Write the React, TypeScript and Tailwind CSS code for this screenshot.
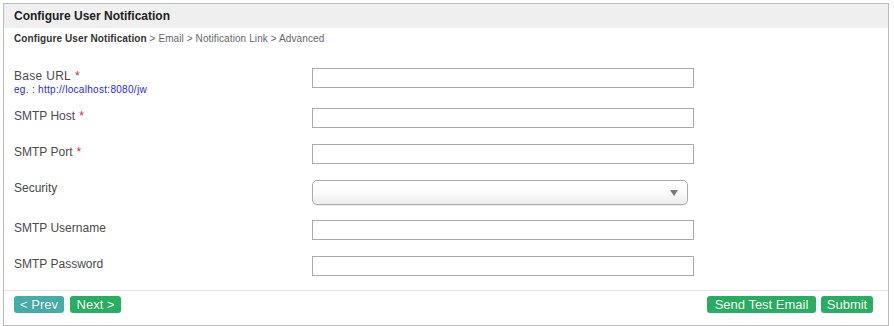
import React from 'react';

const Req = () => <span className="text-[#e0262b] ml-[4px]">*</span>;

const TextInput = () => (
  <input
    type="text"
    className="block w-[382px] h-[20px] border border-[#a9a9a9] bg-white px-1 text-[12px] outline-none"
  />
);

export default function App() {
  return (
    <div className="p-[3px] w-[894px] h-[326px] bg-white" style={{ fontFamily: '"Liberation Sans", Arial, sans-serif' }}>
      <div className="w-[886px] h-[323px] border border-[#bdbdbd] flex flex-col">
        {/* Header */}
        <div className="h-[24px] bg-[#efefef] pl-[10px] flex items-center text-[12px] font-bold text-[#222]">
          Configure User Notification
        </div>

        {/* Breadcrumb */}
        <div className="pl-[10px] pt-[4px] text-[10px] leading-[14px] text-[#666] tracking-[0.1px]">
          <span className="font-bold text-[#333]">Configure User Notification</span> &gt; Email &gt; Notification Link &gt; Advanced
        </div>

        {/* Form */}
        <div className="pl-[10px] mt-[22px] flex-1 text-[12px] text-[#4a4a4a]">
          <div className="flex h-[40px]">
            <div className="w-[298px] leading-[14px] pt-[1px]">
              <div className="tracking-[0.3px]">Base URL<Req /></div>
              <div className="text-[10px] leading-[11px] text-[#1f1fff] mt-[1px] tracking-[0.3px]">eg. : http://localhost:8080/jw</div>
            </div>
            <TextInput />
          </div>
          <div className="flex h-[36px]">
            <div className="w-[298px] leading-[14px] pt-[1px]">SMTP Host<Req /></div>
            <TextInput />
          </div>
          <div className="flex h-[36px]">
            <div className="w-[298px] leading-[14px] pt-[1px]">SMTP Port<Req /></div>
            <TextInput />
          </div>
          <div className="flex h-[40px]">
            <div className="w-[298px] leading-[14px] pt-[1px]">Security</div>
            <div className="relative w-[376px] h-[25px] rounded-[5px] border border-[#aaaaaa] bg-gradient-to-b from-white via-[#fbfbfb] to-[#ececec] shadow-[0_1px_1px_rgba(0,0,0,0.08)]">
              <svg className="absolute right-[9px] top-[9px]" width="8" height="6" viewBox="0 0 8 6">
                <path d="M0 0 H8 L4 6 Z" fill="#7a7a7a" />
              </svg>
            </div>
          </div>
          <div className="flex h-[36px]">
            <div className="w-[298px] leading-[14px] pt-[1px]">SMTP Username</div>
            <TextInput />
          </div>
          <div className="flex h-[33px]">
            <div className="w-[298px] leading-[14px] pt-[1px]">SMTP Password</div>
            <TextInput />
          </div>
        </div>

        {/* Footer */}
        <div className="border-t border-[#e6e6e6] h-[35px] pt-[5px] pl-[10px] pr-[15px] flex items-start justify-between">
          <div className="flex gap-[6px]">
            <button className="w-[50px] h-[17px] rounded-[3px] bg-[#45ada7] text-white text-[13px] leading-[17px] [text-shadow:0_0_1px_rgba(0,0,0,0.3)]">
              &lt; Prev
            </button>
            <button className="w-[51px] h-[17px] rounded-[3px] bg-[#27ae60] text-white text-[13px] leading-[17px] [text-shadow:0_0_1px_rgba(0,0,0,0.3)]">
              Next &gt;
            </button>
          </div>
          <div className="flex gap-[5px]">
            <button className="w-[109px] h-[17px] rounded-[3px] bg-[#27ae60] text-white text-[13px] leading-[17px] [text-shadow:0_0_1px_rgba(0,0,0,0.3)]">
              Send Test Email
            </button>
            <button className="w-[52px] h-[17px] rounded-[3px] bg-[#27ae60] text-white text-[13px] leading-[17px] [text-shadow:0_0_1px_rgba(0,0,0,0.3)]">
              Submit
            </button>
          </div>
        </div>
      </div>
    </div>
  );
}
